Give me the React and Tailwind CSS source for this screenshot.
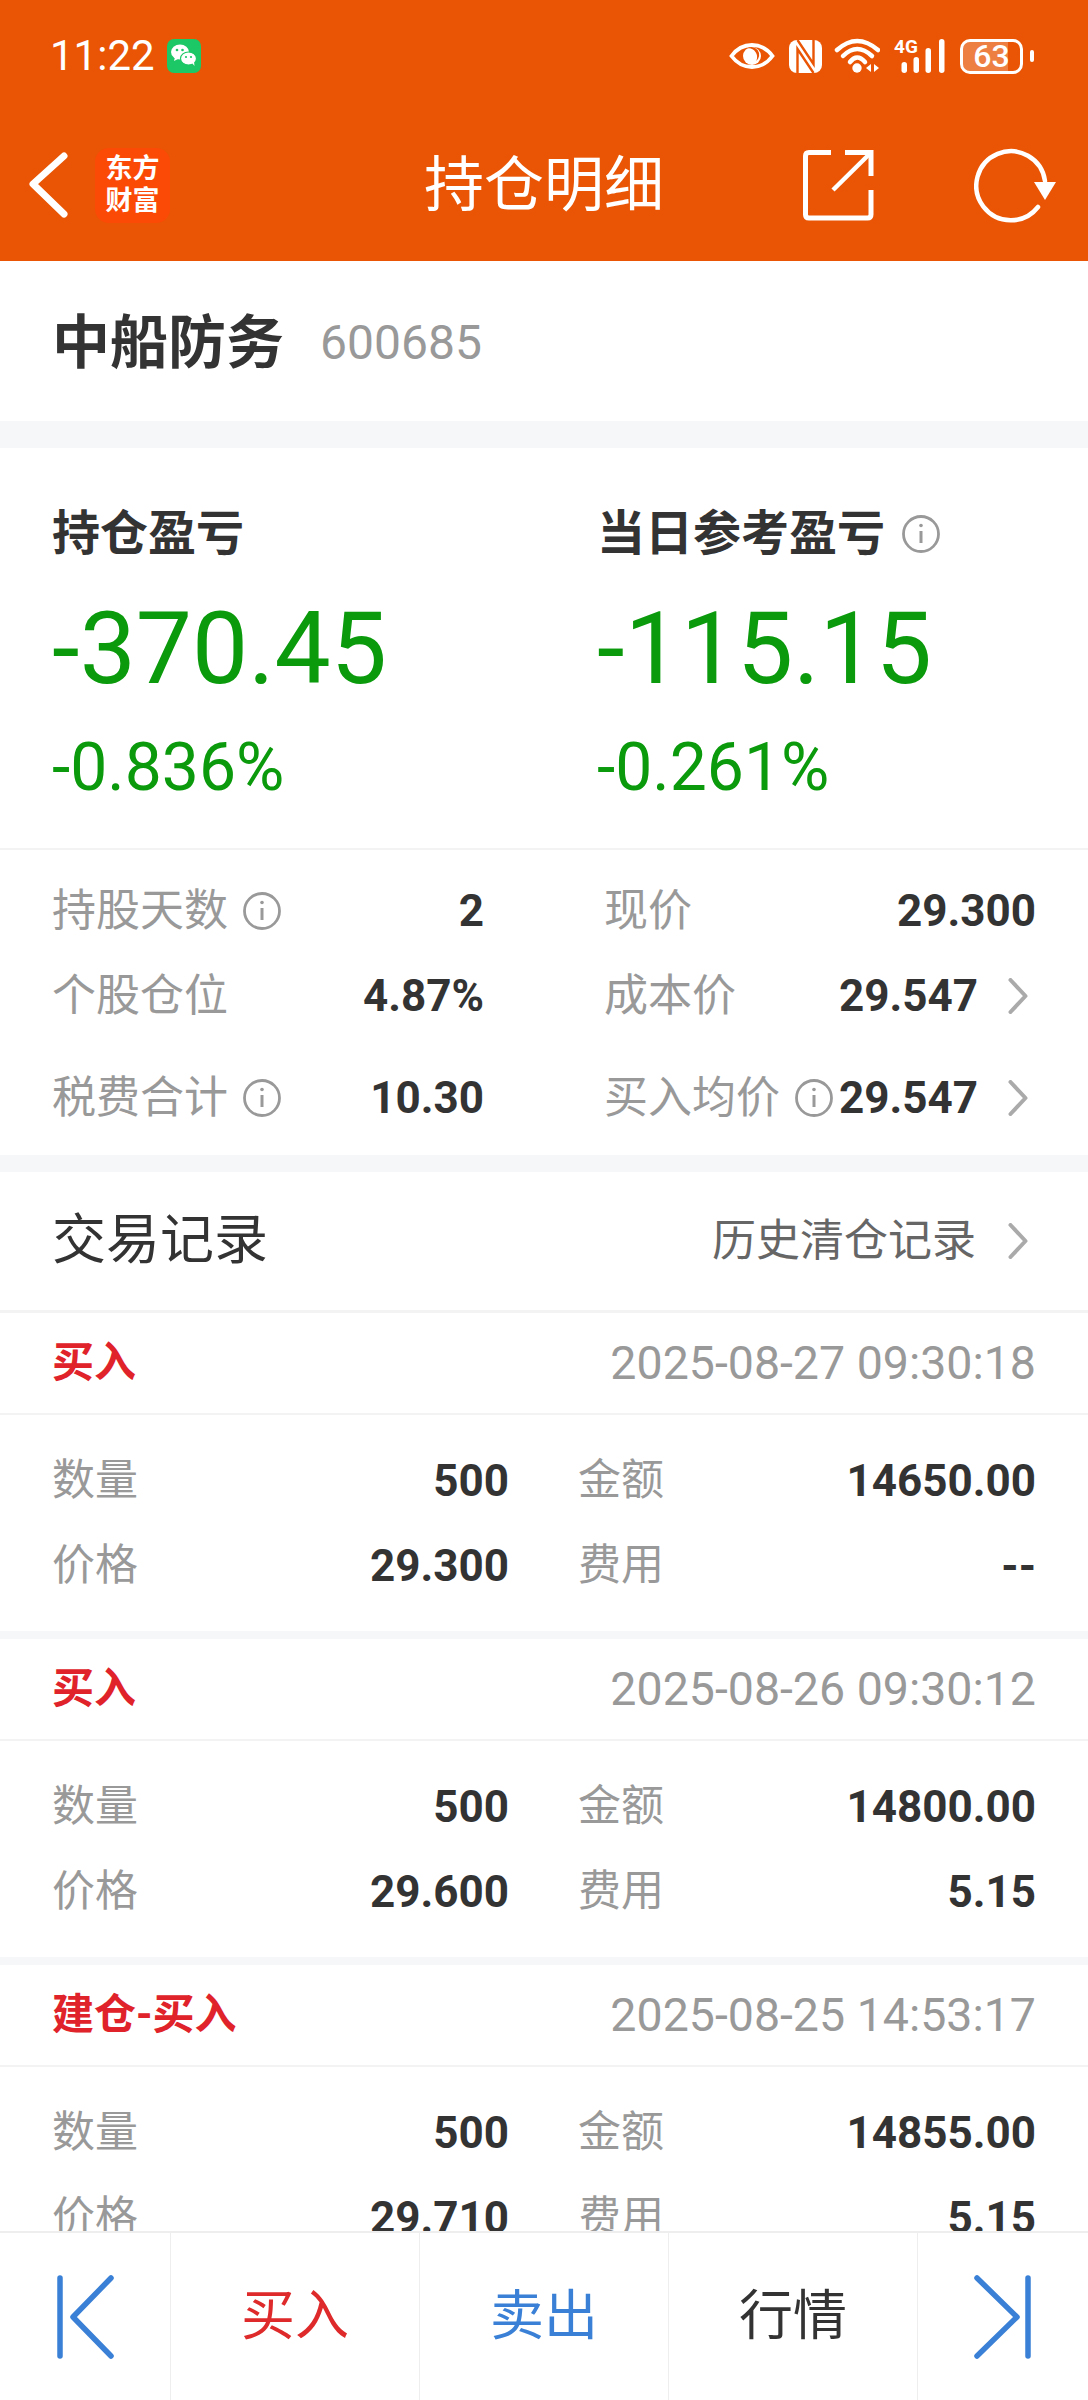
const GREEN = 'text-[#0a9a0c]';

const records = [
  { type: '买入', time: '2025-08-27 09:30:18', qty: '500', amount: '14650.00', price: '29.300', fee: '--' },
  { type: '买入', time: '2025-08-26 09:30:12', qty: '500', amount: '14800.00', price: '29.600', fee: '5.15' },
  { type: '建仓-买入', time: '2025-08-25 14:53:17', qty: '500', amount: '14855.00', price: '29.710', fee: '5.15' },
];

function InfoIcon({ className = '' }) {
  return (
    <svg className={`w-10 h-10 shrink-0 ${className}`} viewBox="0 0 40 40" fill="none" stroke="#999" strokeWidth="2.8">
      <circle cx="20" cy="20" r="17.5" />
      <path d="M20 17v12" strokeWidth="3" />
      <circle cx="20" cy="11.500" r="1.800" fill="#999" stroke="none" />
    </svg>
  );
}

function Chevron({ className = '' }) {
  return (
    <svg className={`w-[20px] h-[36px] shrink-0 ${className}`} viewBox="0 0 20 36" fill="none" stroke="#aaa" strokeWidth="4" strokeLinecap="round" strokeLinejoin="round">
      <path d="M2.500 2 L17.500 18 L2.500 34" />
    </svg>
  );
}

function StatusBar() {
  return (
    <div className="h-[110px] pt-[2px] flex items-center justify-between pl-[50px] pr-[54px] text-white">
      <div className="flex items-center gap-[12px]">
        <span className="text-[42px] leading-none">11:22</span>
        <svg className="w-[34px] h-[34px]" viewBox="0 0 34 34">
          <rect width="34" height="34" rx="7" fill="#1cc765" />
          <ellipse cx="13" cy="13" rx="9" ry="7.500" fill="#fff" />
          <path d="M8 18l-1 4 5-2.500z" fill="#fff" />
          <ellipse cx="21.500" cy="19.500" rx="8" ry="6.500" fill="#fff" stroke="#1cc765" strokeWidth="1.200" />
          <path d="M25 24l2.500 3-.5-4.500z" fill="#fff" />
          <circle cx="10" cy="11" r="1.300" fill="#1cc765" />
          <circle cx="15.500" cy="11" r="1.300" fill="#1cc765" />
          <circle cx="19" cy="18" r="1.100" fill="#1cc765" />
          <circle cx="24" cy="18" r="1.100" fill="#1cc765" />
        </svg>
      </div>
      <div className="flex items-center gap-[14px]">
        {/* eye */}
        <svg className="w-[46px] h-[26px]" viewBox="0 0 46 26" fill="none">
          <path d="M2.500 13C8 5.500 15 2 23 2S38 5.500 43.500 13C38 20.500 31 24 23 24S8 20.500 2.500 13Z" stroke="#fff" strokeWidth="3.800" />
          <circle cx="23" cy="13" r="9" fill="#fff" />
          <path d="M18 5.500a8.500 8.500 0 0 1 9 12.500a7.500 7.500 0 0 0-9-12.500Z" fill="#e95504" />
        </svg>
        {/* nfc */}
        <svg className="w-[33px] h-[33px]" viewBox="0 0 33 33">
          <rect width="33" height="33" rx="8" fill="#fff" />
          <path d="M8.500 33V9l16 24M24.500 0V24L8.500 0" fill="none" stroke="#e95504" strokeWidth="2.400" />
        </svg>
        {/* wifi */}
        <svg className="w-[46px] h-[36px] -ml-[2px]" viewBox="0 0 46 36" fill="none" stroke="#fff" strokeWidth="4.500" strokeLinecap="round">
          <path d="M3 12Q23 -6 44 12" />
          <path d="M9 18Q23 4 38 18" />
          <path d="M16 24Q23 15 31 24" />
          <circle cx="23" cy="30" r="4.700" fill="#fff" stroke="none" />
          <path d="M37 26v8l-5-4zM40 26v8l5-4z" fill="#fff" stroke="none" />
        </svg>
        <div className="relative w-[52px] h-[36px]">
          <span className="absolute left-0 top-[-1px] text-[19px] font-bold leading-[19px]">4G</span>
          <svg className="absolute inset-0 w-[52px] h-[36px]" viewBox="0 0 52 36" fill="#fff">
            <rect x="7.500" y="24" width="5.500" height="11" rx="2.750" />
            <rect x="19.500" y="19" width="5.500" height="16" rx="2.750" />
            <rect x="31.500" y="10" width="5.500" height="25" rx="2.750" />
            <rect x="45" y="1" width="5.500" height="34" rx="2.750" />
          </svg>
        </div>
        <div className="flex items-center gap-[7px]">
          <div className="relative w-[63px] h-[35px] rounded-[10px] border-[3px] border-white overflow-hidden flex items-center justify-center">
            <div className="absolute left-0 top-0 bottom-0 w-[45px] bg-white/25" />
            <span className="relative text-[32px] leading-none font-medium">63</span>
          </div>
          <div className="w-[4px] h-[12px] rounded-full bg-white" />
        </div>
      </div>
    </div>
  );
}

function NavBar() {
  return (
    <div className="h-[151px] pb-[1px] grid grid-cols-[1fr_auto_1fr] items-center text-white">
      <div className="flex items-center pl-[28px] gap-[27px]">
        <svg className="w-[40px] h-[66px]" viewBox="0 0 40 66" fill="none" stroke="#fff" strokeWidth="7" strokeLinecap="round" strokeLinejoin="round">
          <path d="M36 4 L5 32 L36 62" />
        </svg>
        <div className="w-[75px] h-[75px] rounded-[14px] bg-[#fb4a06] flex flex-col items-center justify-center font-bold text-[27px] leading-[32px]">
          <span>东方</span>
          <span>财富</span>
        </div>
      </div>
      <div className="text-[60px] leading-none pt-[2px]">持仓明细</div>
      <div className="flex items-center justify-end pr-[28px] gap-[99px]">
        <svg className="w-[74px] h-[74px]" viewBox="0 0 74 74" fill="none" stroke="#fff" strokeWidth="5">
          <path d="M30 4.500H8Q4.500 4.500 4.500 8V66.500Q4.500 70 8 70H66.500Q70 70 70 66.500V42" />
          <path d="M44 4.500H70V28" />
          <path d="M32 42L70 4.500" strokeWidth="4.500" />
        </svg>
        <svg className="w-[86px] h-[76px]" viewBox="0 0 86 76" fill="none" stroke="#fff" strokeWidth="4.500" strokeLinecap="round">
          <path d="M64 60A34.500 34.500 0 1 1 71 34" />
          <path d="M60 35H82L71 53Z" fill="#fff" stroke="none" />
        </svg>
      </div>
    </div>
  );
}

function Stat({ label, value, pct, info }) {
  return (
    <div>
      <div className="flex items-center gap-[16px] h-[60px]">
        <span className="text-[48px] font-bold leading-none text-[#333]">{label}</span>
        {info && <InfoIcon />}
      </div>
      <div className={`mt-[30px] h-[110px] text-[100px] leading-[110px] ${GREEN}`}>{value}</div>
      <div className={`mt-[29px] h-[70px] text-[66px] leading-[70px] ${GREEN}`}>{pct}</div>
    </div>
  );
}

function DetailCell({ label, value, info, arrow, className = '' }) {
  return (
    <div className={`flex items-center h-[85px] ${className}`}>
      <span className="text-[44px] leading-none text-[#999]">{label}</span>
      {info && <InfoIcon className="ml-[14px]" />}
      <span className="ml-auto text-[44px] leading-none font-bold text-[#333]">{value}</span>
      {arrow && <Chevron className="ml-[30px] mr-[8px]" />}
    </div>
  );
}

function Record({ record }) {
  return (
    <div className="border-b-[8px] border-[#f6f7f9]">
      <div className="h-[102px] flex items-center justify-between px-[52px] border-b-2 border-[#f3f3f3]">
        <span className="text-[42px] leading-none font-bold text-[#e0232b]">{record.type}</span>
        <span className="text-[46.500px] leading-none text-[#999]">{record.time}</span>
      </div>
      <div className="grid grid-cols-[457px_458px] gap-x-[69px] px-[52px] py-[23px]">
        <TradeCell label="数量" value={record.qty} />
        <TradeCell label="金额" value={record.amount} />
        <TradeCell label="价格" value={record.price} />
        <TradeCell label="费用" value={record.fee} />
      </div>
    </div>
  );
}

function TradeCell({ label, value }) {
  return (
    <div className="flex items-center justify-between h-[85px]">
      <span className="text-[43px] leading-none text-[#999]">{label}</span>
      <span className="text-[44px] leading-none font-bold text-[#333]">{value}</span>
    </div>
  );
}

function BottomBar() {
  return (
    <div className="h-[169px] shrink-0 border-t-2 border-[#eeeeee] bg-white grid grid-cols-[170px_249px_249px_249px_171px] text-[54px]">
      <div className="flex items-center justify-center">
        <svg className="w-[60px] h-[86px]" viewBox="0 0 60 86" fill="none" stroke="#3a80d6" strokeWidth="5.500" strokeLinecap="round" strokeLinejoin="round">
          <path d="M5 4V82" />
          <path d="M56 4L18 43L56 82" />
        </svg>
      </div>
      <div className="border-l border-[#eeeeee] flex items-center justify-center text-[#de2a2a]">买入</div>
      <div className="border-l border-[#eeeeee] flex items-center justify-center text-[#3a80d6]">卖出</div>
      <div className="border-l border-[#eeeeee] flex items-center justify-center text-[#333]">行情</div>
      <div className="border-l border-[#eeeeee] flex items-center justify-center">
        <svg className="w-[60px] h-[86px]" viewBox="0 0 60 86" fill="none" stroke="#3a80d6" strokeWidth="5.500" strokeLinecap="round" strokeLinejoin="round">
          <path d="M55 4V82" />
          <path d="M4 4L44 43L4 82" />
        </svg>
      </div>
    </div>
  );
}

export default function App() {
  return (
    <div className="w-[1088px] h-[2400px] overflow-hidden flex flex-col bg-white font-[Roboto,'Noto_Sans_CJK_SC',sans-serif]">
      <div className="bg-[#e95504] h-[261px] shrink-0">
        <StatusBar />
        <NavBar />
      </div>
      <div className="flex-1 overflow-hidden">
        <div className="h-[187px] flex items-center px-[52px] pt-[4px] gap-[36px] border-b-[27px] border-[#f6f7f9]">
          <span className="text-[58px] font-bold leading-none text-[#333]">中船防务</span>
          <span className="text-[48px] leading-none text-[#999]">600685</span>
        </div>
        <div className="grid grid-cols-[545px_1fr] pl-[52px] pt-[56px] pb-[45px] border-b-2 border-[#f3f3f3]">
          <Stat label="持仓盈亏" value="-370.45" pct="-0.836%" />
          <Stat label="当日参考盈亏" value="-115.15" pct="-0.261%" info />
        </div>
        <div className="grid grid-cols-[432px_432px] gap-x-[120px] px-[52px] pt-[18px] pb-[15px] border-b-[17px] border-[#f6f7f9]">
          <DetailCell label="持股天数" value="2" info />
          <DetailCell label="现价" value="29.300" />
          <DetailCell label="个股仓位" value="4.87%" />
          <DetailCell label="成本价" value="29.547" arrow />
          <DetailCell label="税费合计" value="10.30" info className="mt-[17px]" />
          <DetailCell label="买入均价" value="29.547" info arrow className="mt-[17px]" />
        </div>
        <div className="h-[141px] flex items-center justify-between pl-[52px] pr-[60px] border-b-[3px] border-[#f3f3f3]">
          <span className="text-[54px] leading-none text-[#333]">交易记录</span>
          <div className="flex items-center">
            <span className="text-[44px] leading-none text-[#666]">历史清仓记录</span>
            <Chevron className="ml-[32px]" />
          </div>
        </div>
        {records.map((record, index) => (
          <Record key={index} record={record} />
        ))}
      </div>
      <BottomBar />
    </div>
  );
}
